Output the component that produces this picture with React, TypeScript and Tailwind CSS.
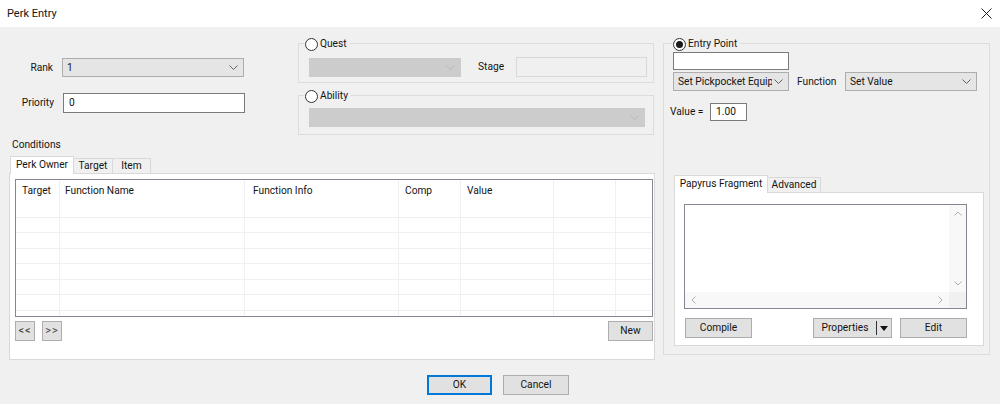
import React from "react";

function Chevron({ color = "#606060" }: { color?: string }) {
  return (
    <svg width="9" height="5" viewBox="0 0 9 5" className="shrink-0">
      <path d="M0.5 0.5L4.5 4.5L8.5 0.5" stroke={color} fill="none" strokeWidth="1" />
    </svg>
  );
}

function Combo({ value, width, disabled }: { value?: string; width: string; disabled?: boolean }) {
  return (
    <div
      className={`${width} flex h-[19px] items-center gap-[2px] overflow-hidden border pl-[4px] pr-[5px] ${
        disabled ? "border-[#cccccc] bg-[#cccccc]" : "border-[#adadad] bg-[#e5e5e5]"
      }`}
    >
      <span className="flex-1 overflow-hidden whitespace-nowrap">{value}</span>
      <Chevron color={disabled ? "#b8b8b8" : "#606060"} />
    </div>
  );
}

function Radio({ label, checked }: { label: string; checked?: boolean }) {
  return (
    <div className="flex h-[14px] w-fit items-center gap-[2px] bg-[#f0f0f0] pl-[1px] pr-[3px]">
      <span className="flex h-[13px] w-[13px] items-center justify-center rounded-full border border-[#333333] bg-white">
        {checked && <span className="h-[7px] w-[7px] rounded-full bg-[#1a1a1a]" />}
      </span>
      <span>{label}</span>
    </div>
  );
}

function Button({ children, width, primary }: { children: React.ReactNode; width: string; primary?: boolean }) {
  return (
    <div
      className={`${width} flex h-[20px] items-center justify-center bg-[#e1e1e1] ${
        primary ? "border-2 border-[#0078d7]" : "border border-[#adadad]"
      }`}
    >
      {children}
    </div>
  );
}

const columns = [
  { label: "Target", pad: "pl-[6px]" },
  { label: "Function Name", pad: "pl-[5px]" },
  { label: "Function Info", pad: "pl-[8px]" },
  { label: "Comp", pad: "pl-[6px]" },
  { label: "Value", pad: "pl-[6px]" },
  { label: "", pad: "" },
  { label: "", pad: "" },
];
const rowHeights = ["h-[16px]", "h-[15px]", "h-[16px]", "h-[15px]", "h-[16px]", "h-[15px]", "h-[16px]"];
const grid = "grid grid-cols-[44px_185px_154px_62px_93px_62px_1fr]";

function ConditionsTable() {
  return (
    <div className="h-[138px] border border-[#828790] bg-white">
      <div className={`${grid} h-[22px]`}>
        {columns.map((c, i) => (
          <div key={i} className={`flex items-center border-r border-[#f0f0f0] last:border-r-0 ${c.pad}`}>
            {c.label}
          </div>
        ))}
      </div>
      {rowHeights.map((h, r) => (
        <div key={r} className={`${grid} ${h} border-b border-[#f0f0f0]`}>
          {columns.map((_, i) => (
            <div key={i} className="border-r border-[#f0f0f0] last:border-r-0" />
          ))}
        </div>
      ))}
      <div className={`${grid} h-[5px]`}>
        {columns.map((_, i) => (
          <div key={i} className="border-r border-[#f0f0f0] last:border-r-0" />
        ))}
      </div>
    </div>
  );
}

function ScriptBox() {
  return (
    <div className="flex h-[105px] w-[283px] flex-col border border-[#828790] bg-white">
      <div className="flex flex-1">
        <div className="flex-1" />
        <div className="flex w-[17px] flex-col items-center justify-between bg-[#f8f8f8] py-[6px]">
          <svg width="8" height="5" viewBox="0 0 8 5"><path d="M0.5 4.5L4 1L7.5 4.5" stroke="#b0b0b0" fill="none" /></svg>
          <svg width="8" height="5" viewBox="0 0 8 5"><path d="M0.5 0.5L4 4L7.5 0.5" stroke="#b0b0b0" fill="none" /></svg>
        </div>
      </div>
      <div className="flex h-[16px]">
        <div className="flex flex-1 items-center justify-between bg-[#f8f8f8] px-[6px]">
          <svg width="5" height="8" viewBox="0 0 5 8"><path d="M4.5 0.5L1 4L4.5 7.5" stroke="#b0b0b0" fill="none" /></svg>
          <svg width="5" height="8" viewBox="0 0 5 8"><path d="M0.5 0.5L4 4L0.5 7.5" stroke="#b0b0b0" fill="none" /></svg>
        </div>
        <div className="w-[17px] bg-[#f0f0f0]" />
      </div>
    </div>
  );
}

export default function App() {
  return (
    <div className="h-[404px] w-[1000px] overflow-hidden bg-[#f0f0f0] font-['Roboto',sans-serif] text-[10.2px] leading-[14px] text-[#141414]">
      {/* title bar */}
      <div className="flex h-[27px] items-center justify-between bg-white pl-[7px] pr-[8px]">
        <span className="text-[11px]">Perk Entry</span>
        <svg width="11" height="11" viewBox="0 0 11 11">
          <path d="M0.5 0.5L10.5 10.5M10.5 0.5L0.5 10.5" stroke="#1a1a1a" strokeWidth="1" />
        </svg>
      </div>

      <div className="flex pl-[9px] pt-[16px]">
        {/* left column */}
        <div className="w-[646px]">
          <div className="flex h-[92px]">
            <div className="w-[289px]">
              <div className="mt-[15px] flex items-center">
                <span className="w-[44px] text-right">Rank</span>
                <div className="ml-[9px]">
                  <Combo value="1" width="w-[182px]" />
                </div>
              </div>
              <div className="mt-[16px] flex items-center">
                <span className="w-[45px] text-right">Priority</span>
                <div className="ml-[9px] flex h-[20px] w-[182px] items-center border border-[#7a7a7a] bg-white pl-[5px]">
                  0
                </div>
              </div>
            </div>

            <div className="w-[356px]">
              <div className="h-[40px] border border-[#dcdcdc]">
                <div className="-mt-[7px] ml-[5px]">
                  <Radio label="Quest" />
                </div>
                <div className="mt-[6px] flex items-center pl-[10px]">
                  <Combo width="w-[152px]" disabled />
                  <span className="ml-[17px] w-[38px]">Stage</span>
                  <div className="h-[20px] w-[131px] border border-[#d9d9d9] bg-[#f0f0f0]" />
                </div>
              </div>
              <div className="mt-[12px] h-[40px] border border-[#dcdcdc]">
                <div className="-mt-[7px] ml-[5px]">
                  <Radio label="Ability" />
                </div>
                <div className="mt-[5px] pl-[10px]">
                  <Combo width="w-[336px]" disabled />
                </div>
              </div>
            </div>
          </div>

          {/* conditions */}
          <div className="ml-[3px] mt-[3px] h-[14px]">Conditions</div>
          <div className="relative z-10 -mb-[1px] ml-[1px] mt-[4px] flex h-[18px] items-end">
            <div className="flex h-[18px] w-[64px] items-start justify-center border border-b-0 border-[#d9d9d9] bg-white pt-[1px]">
              Perk Owner
            </div>
            <div className="flex h-[16px] w-[39px] items-center justify-center border border-l-0 border-[#d9d9d9] bg-[#f0f0f0]">
              Target
            </div>
            <div className="flex h-[16px] w-[38px] items-center justify-center border border-l-0 border-[#d9d9d9] bg-[#f0f0f0]">
              Item
            </div>
          </div>
          <div className="h-[187px] border border-[#d9d9d9] bg-white pl-[5px] pr-[1px] pt-[5px]">
            <ConditionsTable />
            <div className="mt-[4px] flex items-center justify-between">
              <div className="flex gap-[7px] text-[11px] tracking-[1px] text-[#444444]">
                <Button width="w-[20px]">&lt;&lt;</Button>
                <Button width="w-[20px]">&gt;&gt;</Button>
              </div>
              <Button width="w-[45px]">New</Button>
            </div>
          </div>
        </div>

        {/* right column */}
        <div className="ml-[8px] h-[312px] w-[327px] border border-[#dcdcdc]">
          <div className="-mt-[7px] ml-[8px]">
            <Radio label="Entry Point" checked />
          </div>
          <div className="ml-[9px] mt-[1px] h-[18px] w-[116px] border border-[#7a7a7a] bg-white" />
          <div className="ml-[9px] mt-[2px] flex items-center">
            <Combo value="Set Pickpocket Equipp" width="w-[116px]" />
            <span className="ml-[8px] w-[48px]">Function</span>
            <Combo value="Set Value" width="w-[132px]" />
          </div>
          <div className="ml-[6px] mt-[12px] flex items-center">
            <span className="w-[40px]">Value =</span>
            <div className="flex h-[18px] w-[37px] items-center border border-[#7a7a7a] bg-white pl-[5px]">1.00</div>
          </div>

          <div className="relative z-10 -mb-[1px] ml-[10px] mt-[54px] flex h-[18px] items-end">
            <div className="flex h-[18px] w-[94px] items-start justify-center border border-b-0 border-[#d9d9d9] bg-white pt-[1px]">
              Papyrus Fragment
            </div>
            <div className="flex h-[16px] w-[53px] items-center justify-center border border-l-0 border-[#d9d9d9] bg-[#f0f0f0]">
              Advanced
            </div>
          </div>
          <div className="ml-[10px] h-[154px] w-[310px] border border-[#d9d9d9] bg-white pl-[9px] pt-[11px]">
            <ScriptBox />
            <div className="mt-[9px] flex pl-[1px]">
              <Button width="w-[67px]">Compile</Button>
              <div className="ml-[61px] flex h-[20px] w-[79px] items-center border border-[#adadad] bg-[#e1e1e1]">
                <span className="flex-1 text-center">Properties</span>
                <span className="h-[14px] w-px bg-[#333333]" />
                <svg width="10" height="10" viewBox="0 0 10 10" className="mx-[2px]">
                  <path d="M1 3L9 3L5 8Z" fill="#111111" />
                </svg>
              </div>
              <div className="ml-[8px]">
                <Button width="w-[67px]">Edit</Button>
              </div>
            </div>
          </div>
        </div>
      </div>

      {/* dialog buttons */}
      <div className="mt-[15px] flex justify-center gap-[11px] pr-[4px]">
        <Button width="w-[65px]" primary>
          OK
        </Button>
        <Button width="w-[66px]">Cancel</Button>
      </div>
    </div>
  );
}
